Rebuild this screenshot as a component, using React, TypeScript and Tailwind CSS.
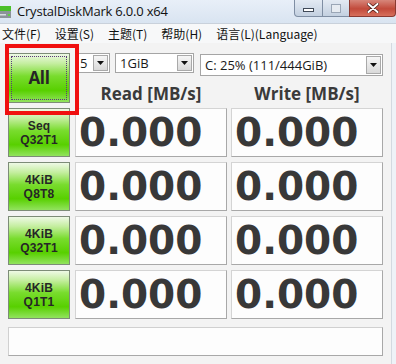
import React from 'react';

const tests = [
  ['Seq', 'Q32T1'],
  ['4KiB', 'Q8T8'],
  ['4KiB', 'Q32T1'],
  ['4KiB', 'Q1T1'],
];

const greenBtn =
  'border border-[#7d8c78] bg-[linear-gradient(to_bottom,#eef9e6_0%,#c4ee9f_20%,#79dc2e_46%,#58d000_76%,#92e35e_100%)] text-[#262626] font-bold';

const Arrow = () => (
  <div className="flex h-full w-[15px] items-center justify-center border border-[#a9a9a9] bg-[linear-gradient(to_bottom,#f6f6f6,#d9d9d9)]">
    <svg width="7" height="4" viewBox="0 0 7 4">
      <path d="M0 0h7L3.5 4z" fill="#111" />
    </svg>
  </div>
);

const Combo = ({ text, className }: { text: string; className: string }) => (
  <div className={`flex items-center justify-between border border-[#a5a5a5] bg-white pl-[4px] pr-[1px] py-[1px] text-[13px] text-[#1a1a1a] ${className}`}>
    <span className="leading-none">{text}</span>
    <Arrow />
  </div>
);

const Value = () => (
  <div className="flex h-[49px] w-[152px] items-center border border-[#d4d4d4] border-b-[#a8a8a8] border-r-[#a8a8a8] bg-[#fdfdfd] pl-[3px]">
    <span className="font-['DejaVu_Sans',sans-serif] text-[39px] font-bold leading-none text-[#383838]">
      0.000
    </span>
  </div>
);

export default function App() {
  return (
    <div className="relative flex h-[364px] w-[396px] flex-col overflow-hidden bg-[#f3f3f3] font-['Open_Sans','Noto_Sans_CJK_SC',sans-serif]">
      {/* title bar */}
      <div className="flex h-[23px] items-start justify-between bg-[linear-gradient(to_bottom,#e8eff8,#d9e4f1)]">
        <div className="flex h-full items-center">
          <svg width="13" height="14" viewBox="0 0 13 14" className="ml-[-1px] mt-[1px]">
            <rect x="0" y="1" width="12" height="5" fill="#4cc02a" />
            <rect x="0" y="6" width="12" height="7" fill="#8c9499" />
            <rect x="1" y="9" width="6" height="1.5" fill="#d8dde0" />
            <rect x="9" y="9" width="2" height="2" fill="#5fd040" />
          </svg>
          <span className="ml-[5px] text-[13px] tracking-[-0.2px] text-[#111]">CrystalDiskMark 6.0.0 x64</span>
        </div>
        <div className="flex h-[17px]">
          <div className="flex w-[29px] items-center justify-center rounded-bl-[4px] border border-t-0 border-[#7f8ea3] bg-[linear-gradient(to_bottom,#e3eaf3,#c3d0e0)]">
            <div className="mt-[3px] h-[4px] w-[11px] border border-[#404a58] bg-white" />
          </div>
          <div className="flex w-[26px] items-center justify-center border-b border-[#7f8ea3] bg-[linear-gradient(to_bottom,#e3eaf3,#c3d0e0)]">
            <div className="h-[9px] w-[10px] border border-[#9aa6b6] bg-[#e6ebf1]" />
          </div>
          <div className="flex w-[47px] items-center justify-center rounded-br-[4px] border border-t-0 border-[#8a3a32] bg-[linear-gradient(to_bottom,#d7867a,#c24a3b_55%,#d7705d)]">
            <svg width="12" height="10" viewBox="0 0 12 10">
              <path d="M1.5 1l9 8M10.5 1l-9 8" stroke="#4a1a14" strokeWidth="3.4" strokeLinecap="round" />
              <path d="M1.5 1l9 8M10.5 1l-9 8" stroke="#fff" strokeWidth="2" strokeLinecap="round" />
            </svg>
          </div>
        </div>
      </div>

      {/* menu */}
      <div className="flex h-[20px] items-center gap-[14px] border-t border-[#c9d1db] bg-[#f7f8f9] pl-[2px] text-[12px] text-[#111] font-['Noto_Sans_CJK_SC',sans-serif]">
        <span>文件(F)</span>
        <span>设置(S)</span>
        <span>主题(T)</span>
        <span>帮助(H)</span>
        <span>语言(L)(Language)</span>
      </div>

      {/* content */}
      <div className="flex flex-col pl-[8px] pt-[10px]">
        <div className="flex h-[50px]">
          <div className={`flex w-[62px] items-center justify-center p-[2px] ${greenBtn}`}>
            <div className="flex h-full w-full items-center justify-center border border-dotted border-[#5a3a7a]">
              <span className="text-[17px] tracking-[-0.3px]">All</span>
            </div>
          </div>
          <div className="ml-[5px] flex w-[308px] flex-col">
            <div className="flex items-start">
              <Combo text="5" className="h-[20px] w-[35px]" />
              <Combo text="1GiB" className="ml-[5px] h-[20px] w-[79px]" />
              <Combo text="C: 25% (111/444GiB)" className="ml-[6px] mt-[1px] h-[22px] w-[183px]" />
            </div>
            <div className="mt-[9px] flex text-[17px] font-bold leading-none text-[#3a3a3a]">
              <div className="w-[152px] text-center">Read [MB/s]</div>
              <div className="ml-[4px] w-[152px] text-center">Write [MB/s]</div>
            </div>
          </div>
        </div>

        <div className="mt-[5px] flex flex-col gap-[5px]">
          {tests.map(([a, b], i) => (
            <div key={i} className="flex h-[49px]">
              <div className={`flex w-[62px] flex-col items-center justify-center font-['Liberation_Sans',sans-serif] text-[12px] leading-[14px] tracking-[0.2px] ${greenBtn}`}>
                <span>{a}</span>
                <span>{b}</span>
              </div>
              <div className="ml-[5px]">
                <Value />
              </div>
              <div className="ml-[4px]">
                <Value />
              </div>
            </div>
          ))}
        </div>

        <div className="mt-[8px] h-[29px] w-[375px] border border-[#d0d0d0] border-b-[#a8a8a8] border-r-[#a8a8a8] bg-[#fdfdfd]" />
      </div>

      {/* window right frame */}
      <div className="absolute right-0 top-[43px] bottom-0 w-[5px] border-l border-[#d3d9e0] bg-[#eef2f7]" />

      {/* highlight box */}
      <div className="absolute left-[5px] top-[44px] h-[71px] w-[74px] border-[4px] border-[#f01010]" />
    </div>
  );
}
